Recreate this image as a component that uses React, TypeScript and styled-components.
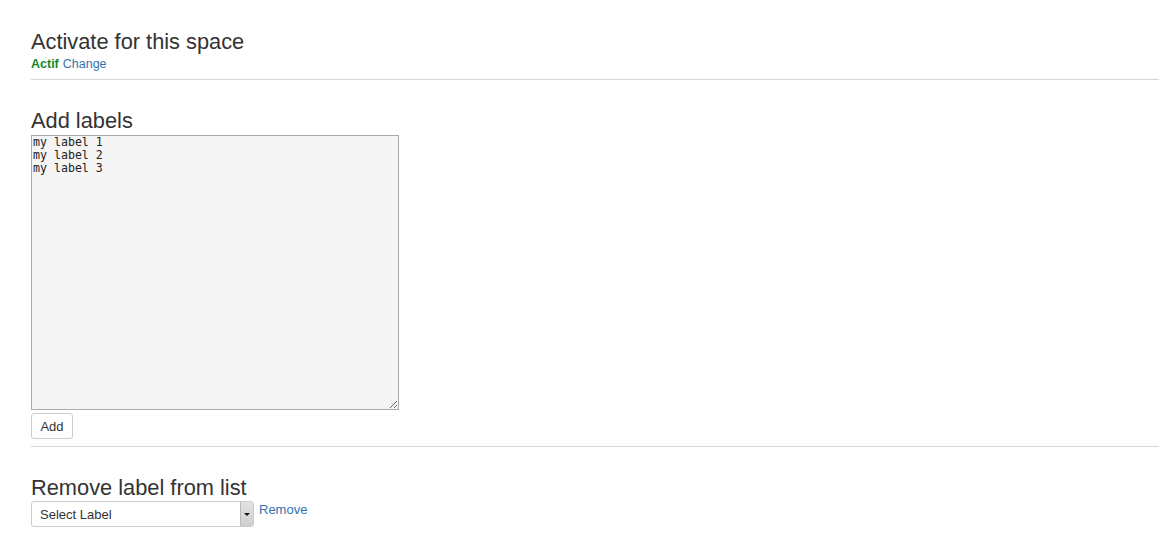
import React from "react";
import styled, { createGlobalStyle } from "styled-components";

const Global = createGlobalStyle`
  html, body { margin: 0; padding: 0; background: #fff; }
  body { font-family: "Liberation Sans", Arial, sans-serif; color: #333; }
`;

const Page = styled.div`
  padding: 30px 11px 0 31px;
`;

const Heading = styled.h2<{ $top?: number }>`
  margin: ${(p) => p.$top ?? 0}px 0 0 0;
  font-size: 21.8px;
  line-height: 24px;
  font-weight: normal;
  color: #333;
`;

const Status = styled.div`
  margin-top: 2px;
  font-size: 12.5px;
  line-height: 16px;
  display: flex;
  gap: 4px;
`;

const Green = styled.span`
  color: #14892c;
  font-weight: bold;
`;

const Link = styled.a`
  color: #3572b0;
  text-decoration: none;
  cursor: pointer;
`;

const Rule = styled.hr<{ $top: number }>`
  margin: ${(p) => p.$top}px 0 0 0;
  border: 0;
  border-top: 1px solid #d6d6d6;
  height: 0;
`;

const Area = styled.textarea`
  display: block;
  margin-top: 2px;
  box-sizing: border-box;
  width: 368px;
  height: 275px;
  padding: 0 1px;
  background: #f5f5f5;
  border: 1px solid #a9a9a9;
  font-family: "DejaVu Sans Mono", monospace;
  font-size: 11.6px;
  line-height: 13px;
  color: #222;
  outline: none;
`;

const Button = styled.button`
  display: block;
  margin-top: 3px;
  box-sizing: border-box;
  height: 26px;
  width: 42px;
  padding: 0;
  background: #fff;
  border: 1px solid #ccc;
  border-radius: 3px;
  font-family: "Liberation Sans", Arial, sans-serif;
  font-size: 13px;
  color: #333;
`;

const SelectRow = styled.div`
  margin-top: 1px;
  display: flex;
  align-items: flex-start;
  gap: 5px;
`;

const SelectBox = styled.div`
  box-sizing: border-box;
  width: 223px;
  height: 26px;
  display: flex;
  border: 1px solid #ccc;
  border-radius: 3px;
  background: #fff;
  overflow: hidden;
`;

const SelectText = styled.div`
  flex: 1;
  padding-left: 8px;
  font-size: 13px;
  line-height: 26px;
  color: #333;
`;

const Arrow = styled.div`
  width: 12px;
  background: linear-gradient(#e2e2e2, #cfcfcf);
  border-left: 1px solid #bbb;
  display: flex;
  align-items: center;
  justify-content: center;
  &::after {
    content: "";
    border-left: 3px solid transparent;
    border-right: 3px solid transparent;
    border-top: 3px solid #111;
    margin-top: 1px;
  }
`;

const RemoveLink = styled(Link)`
  margin-top: 1px;
  font-size: 13px;
  line-height: 16px;
`;

export default function App() {
  return (
    <>
      <Global />
      <Page>
        <Heading>Activate for this space</Heading>
        <Status>
          <Green>Actif</Green>
          <Link>Change</Link>
        </Status>
        <Rule $top={7} />
        <Heading $top={29}>Add labels</Heading>
        <Area defaultValue={"my label 1\nmy label 2\nmy label 3"} spellCheck={false} />
        <Button>Add</Button>
        <Rule $top={7} />
        <Heading $top={29}>Remove label from list</Heading>
        <SelectRow>
          <SelectBox>
            <SelectText>Select Label</SelectText>
            <Arrow />
          </SelectBox>
          <RemoveLink>Remove</RemoveLink>
        </SelectRow>
      </Page>
    </>
  );
}
